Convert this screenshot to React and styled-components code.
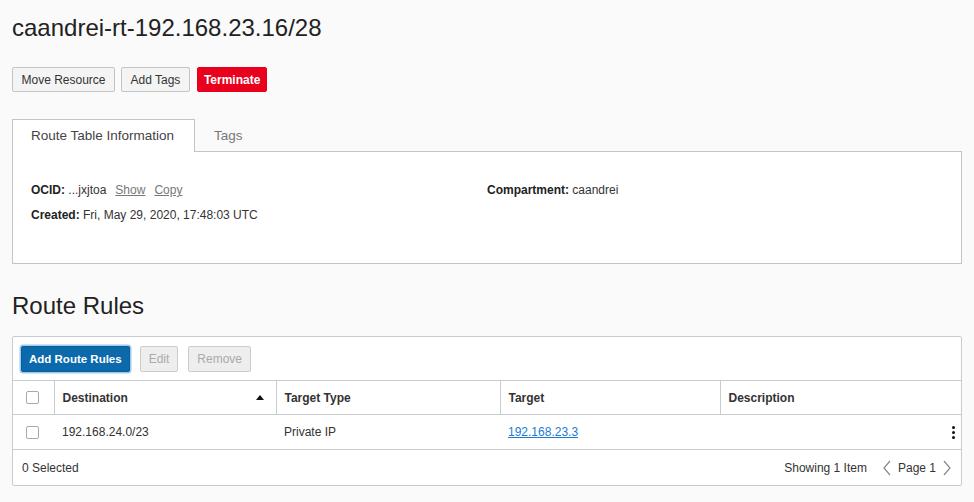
import React from 'react';
import styled, { createGlobalStyle } from 'styled-components';

const GlobalStyle = createGlobalStyle`
  html, body {
    margin: 0;
    padding: 0;
    background: #fafafa;
    font-family: "Liberation Sans", Arial, sans-serif;
    color: #333;
  }
`;

const Page = styled.div`
  padding: 12px 12px 0 12px;
  width: 950px;
`;

const Title = styled.h1`
  margin: 0;
  font-size: 24px;
  font-weight: normal;
  line-height: 32px;
  color: #222;
`;

const ActionBar = styled.div`
  display: flex;
  gap: 6px;
  margin-top: 23px;
`;

const Button = styled.button`
  height: 25px;
  padding: 0 ${(p) => (p.$danger ? '6px' : '8.5px')};
  margin-left: ${(p) => (p.$danger ? '1px' : '0')};
  font-family: inherit;
  font-size: 12px;
  border-radius: 2px;
  border: 1px solid ${(p) => (p.$danger ? '#e8001c' : '#c4c4c4')};
  background: ${(p) => (p.$danger ? '#e8001c' : '#f4f4f4')};
  color: ${(p) => (p.$danger ? '#fff' : '#333')};
  font-weight: ${(p) => (p.$danger ? 'bold' : 'normal')};
`;

const TabStrip = styled.div`
  display: flex;
  margin-top: 27px;
  height: 33px;
`;

const Tab = styled.div`
  box-sizing: border-box;
  height: 33px;
  padding: 0 18px;
  font-size: 13.5px;
  line-height: 31px;
  color: ${(p) => (p.$active ? '#444' : '#777')};
  background: ${(p) => (p.$active ? '#fff' : 'transparent')};
  border: 1px solid ${(p) => (p.$active ? '#c4c4c4' : 'transparent')};
  border-bottom: none;
  width: ${(p) => p.$width};
  position: relative;
  z-index: 1;
`;

const InfoPanel = styled.div`
  box-sizing: border-box;
  height: 113px;
  margin-top: -1px;
  background: #fff;
  border: 1px solid #c4c4c4;
  padding: 29px 18px 0 18px;
  display: grid;
  grid-template-columns: 456px 1fr;
  grid-template-rows: 25px 25px;
  font-size: 12px;
`;

const Field = styled.div`
  color: #333;
  line-height: 18px;
  b {
    font-weight: bold;
    color: #222;
  }
`;

const Link = styled.a`
  color: #777;
  text-decoration: underline;
  margin-left: 9px;
`;

const SectionTitle = styled.h2`
  margin: 26px 0 0 0;
  font-size: 24px;
  font-weight: normal;
  line-height: 32px;
  color: #222;
`;

const TableCard = styled.div`
  box-sizing: border-box;
  margin-top: 14px;
  background: #fff;
  border: 1px solid #c8ccd0;
  border-radius: 2px;
`;

const Toolbar = styled.div`
  display: flex;
  gap: 10px;
  height: 43px;
  align-items: center;
  padding: 0 8px;
  border-bottom: 1px solid #c8ccd0;
`;

const ToolButton = styled.button`
  height: 26px;
  padding: 0 ${(p) => (p.$primary ? '7px' : '8px')};
  font-family: inherit;
  font-size: ${(p) => (p.$primary ? '11.5px' : '12px')};
  border-radius: 2px;
  border: 1px solid ${(p) => (p.$primary ? '#0a5d96' : '#ccc')};
  background: ${(p) => (p.$primary ? '#0c69ab' : '#eeeeee')};
  color: ${(p) => (p.$primary ? '#fff' : '#aaa')};
  font-weight: ${(p) => (p.$primary ? 'bold' : 'normal')};
  box-shadow: ${(p) => (p.$primary ? '0 0 0 1.5px #9ccaf0' : 'none')};
`;

const Table = styled.table`
  width: 100%;
  border-collapse: collapse;
  table-layout: fixed;
  font-size: 12px;
`;

const Th = styled.th`
  height: 33px;
  padding: 0 8px;
  text-align: left;
  font-weight: bold;
  color: #333;
  border-bottom: 1px solid #c8ccd0;
  border-left: ${(p) => (p.$first ? 'none' : '1px solid #c8ccd0')};
  position: relative;
`;

const Td = styled.td`
  height: 34px;
  padding: 0 8px;
  color: #333;
  border-bottom: 1px solid #c8ccd0;
  text-align: ${(p) => (p.$right ? 'right' : 'left')};
`;

const Checkbox = styled.span`
  display: block;
  box-sizing: border-box;
  width: 13px;
  height: 13px;
  margin-left: 5px;
  border: 1px solid #a9a9a9;
  border-radius: 2px;
  background: #fff;
`;

const SortArrow = styled.span`
  position: absolute;
  right: 12px;
  top: 14px;
  width: 0;
  height: 0;
  border-left: 4px solid transparent;
  border-right: 4px solid transparent;
  border-bottom: 5px solid #111;
`;

const IpLink = styled.a`
  color: #1a7bd6;
  text-decoration: underline;
`;

const Kebab = styled.span`
  display: inline-flex;
  flex-direction: column;
  gap: 2px;
  margin-right: -2px;
  vertical-align: middle;
  i {
    display: block;
    width: 3px;
    height: 3px;
    border-radius: 50%;
    background: #111;
  }
`;

const Footer = styled.div`
  display: flex;
  align-items: center;
  justify-content: space-between;
  height: 35px;
  padding: 0 9px;
  font-size: 12px;
  color: #333;
`;

const Pager = styled.div`
  display: flex;
  align-items: center;
  gap: 6px;
`;

const Showing = styled.span`
  margin-right: 9px;
`;

const Chevron = ({ dir }) => (
  <svg width="10" height="16" viewBox="0 0 10 16">
    <path
      d={dir === 'left' ? 'M8 1 L2 8 L8 15' : 'M2 1 L8 8 L2 15'}
      fill="none"
      stroke="#888"
      strokeWidth="1.2"
    />
  </svg>
);

const App = () => {
  return (
    <Page>
      <GlobalStyle />
      <Title>caandrei-rt-192.168.23.16/28</Title>
      <ActionBar>
        <Button>Move Resource</Button>
        <Button>Add Tags</Button>
        <Button $danger>Terminate</Button>
      </ActionBar>

      <TabStrip>
        <Tab $active $width="183px">Route Table Information</Tab>
        <Tab>Tags</Tab>
      </TabStrip>
      <InfoPanel>
        <Field>
          <b>OCID:</b> ...jxjtoa
          <Link>Show</Link>
          <Link>Copy</Link>
        </Field>
        <Field>
          <b>Compartment:</b> caandrei
        </Field>
        <Field>
          <b>Created:</b> Fri, May 29, 2020, 17:48:03 UTC
        </Field>
      </InfoPanel>

      <SectionTitle>Route Rules</SectionTitle>
      <TableCard>
        <Toolbar>
          <ToolButton $primary>Add Route Rules</ToolButton>
          <ToolButton disabled>Edit</ToolButton>
          <ToolButton disabled>Remove</ToolButton>
        </Toolbar>
        <Table>
          <colgroup>
            <col style={{ width: '41px' }} />
            <col style={{ width: '222px' }} />
            <col style={{ width: '224px' }} />
            <col style={{ width: '220px' }} />
            <col />
          </colgroup>
          <thead>
            <tr>
              <Th $first>
                <Checkbox />
              </Th>
              <Th>
                Destination
                <SortArrow />
              </Th>
              <Th>Target Type</Th>
              <Th>Target</Th>
              <Th>Description</Th>
            </tr>
          </thead>
          <tbody>
            <tr>
              <Td>
                <Checkbox />
              </Td>
              <Td>192.168.24.0/23</Td>
              <Td>Private IP</Td>
              <Td>
                <IpLink>192.168.23.3</IpLink>
              </Td>
              <Td $right>
                <Kebab>
                  <i />
                  <i />
                  <i />
                </Kebab>
              </Td>
            </tr>
          </tbody>
        </Table>
        <Footer>
          <span>0 Selected</span>
          <Pager>
            <Showing>Showing 1 Item</Showing>
            <Chevron dir="left" />
            <span>Page 1</span>
            <Chevron dir="right" />
          </Pager>
        </Footer>
      </TableCard>
    </Page>
  );
};

export default App;
